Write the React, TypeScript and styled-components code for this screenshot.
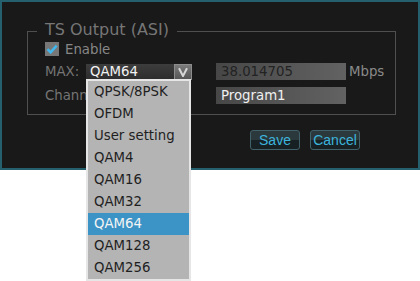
import React from 'react';
import styled, { createGlobalStyle } from 'styled-components';

const GlobalStyle = createGlobalStyle`
  html, body {
    margin: 0;
    padding: 0;
    background: #ffffff;
  }
  body {
    font-family: 'DejaVu Sans', 'Liberation Sans', sans-serif;
    font-size: 13.3px;
  }
`;

const Page = styled.div`
  width: 420px;
  height: 281px;
  background: #ffffff;
`;

const Panel = styled.div`
  width: 420px;
  height: 170px;
  box-sizing: border-box;
  background: #191919;
  border: 2px solid #24606e;
  padding: 29px 0 0 25px;
`;

const Group = styled.div`
  position: relative;
  width: 369px;
  box-sizing: border-box;
  padding: 10px 17px 10px 17px;
  border: 1px solid #4f4f4f;
`;

// sits over the top border, like a fieldset legend
const Legend = styled.span`
  position: absolute;
  top: -12px;
  left: 9px;
  padding: 0 8px;
  line-height: 19px;
  font-size: 16px;
  color: #767676;
  background: #191919;
`;

const CheckRow = styled.label`
  display: flex;
  align-items: center;
  gap: 6px;
  height: 14px;
  color: #878787;
`;

const CheckBox = styled.span`
  width: 14px;
  height: 14px;
  background: #777777;
  display: flex;
  align-items: center;
  justify-content: center;
`;

const Form = styled.div`
  display: grid;
  grid-template-columns: 41px 106px 154px auto;
  grid-auto-rows: 17px;
  row-gap: 7px;
  margin-top: 7px;
  align-items: center;
`;

const Label = styled.span`
  color: #757575;
  white-space: nowrap;
`;

const Unit = styled.span`
  color: #8a8a8a;
  margin-left: 3px;
`;

const SelectWrap = styled.div`
  position: relative;
  height: 16px;
`;

const SelectBox = styled.div`
  display: flex;
  height: 16px;
  background: linear-gradient(#3d3d3d, #2c2c2c);
  color: #f2f2f2;
  line-height: 16px;
`;

const SelectValue = styled.span`
  flex: 1;
  padding-left: 4px;
`;

const ArrowButton = styled.span`
  width: 18px;
  height: 16px;
  box-sizing: border-box;
  background: linear-gradient(#7a7a7a, #565656);
  border: 1px solid #8c8c8c;
  display: flex;
  align-items: center;
  justify-content: center;
`;

const Menu = styled.ul`
  position: absolute;
  z-index: 10;
  top: 15px;
  left: 0;
  width: 105px;
  box-sizing: border-box;
  margin: 0;
  padding: 0;
  list-style: none;
  background: #b4b4b4;
  border: 2px solid #e6e6e6;
`;

const MenuItem = styled.li<{ $active?: boolean }>`
  height: 22px;
  line-height: 22px;
  padding-left: 6px;
  color: ${(p) => (p.$active ? '#f4f4f4' : '#1f1f1f')};
  background: ${(p) => (p.$active ? '#3c93c6' : 'transparent')};
`;

const TextInput = styled.div<{ $light?: boolean }>`
  height: 17px;
  line-height: 17px;
  margin-left: 24px;
  padding-left: 5px;
  background: linear-gradient(to right, #474747, #626262);
  color: ${(p) => (p.$light ? '#f0f0f0' : '#222222')};
`;

const ButtonRow = styled.div`
  display: flex;
  gap: 10px;
  padding: 15px 0 0 223px;
`;

const Button = styled.button`
  width: 50px;
  height: 20px;
  padding: 0;
  border: 1px solid #41616a;
  border-radius: 3px;
  background: linear-gradient(#2c393c 0%, #2c393c 50%, #172124 50%, #172124 100%);
  color: #3db4dc;
  font-family: 'Liberation Sans', Arial, sans-serif;
  font-size: 14px;
  cursor: pointer;
`;

const options = [
  'QPSK/8PSK',
  'OFDM',
  'User setting',
  'QAM4',
  'QAM16',
  'QAM32',
  'QAM64',
  'QAM128',
  'QAM256',
];

const Check = () => (
  <svg width="12" height="10" viewBox="0 0 12 10">
    <path d="M1.5 5.2 L4.6 8.3 L10.6 1.6" fill="none" stroke="#41b7ec" strokeWidth="2.6" />
  </svg>
);

const Chevron = () => (
  <svg width="10" height="10" viewBox="0 0 10 10">
    <path d="M1 1.2 L5 9 L9 1.2" fill="none" stroke="#d6d6d6" strokeWidth="2" />
  </svg>
);

const App: React.FC = () => {
  const selected = 'QAM64';
  return (
    <Page>
      <GlobalStyle />
      <Panel>
        <Group>
          <Legend>TS Output (ASI)</Legend>
          <CheckRow>
            <CheckBox>
              <Check />
            </CheckBox>
            Enable
          </CheckRow>
          <Form>
            <Label>MAX:</Label>
            <SelectWrap>
              <SelectBox>
                <SelectValue>{selected}</SelectValue>
                <ArrowButton>
                  <Chevron />
                </ArrowButton>
              </SelectBox>
              <Menu>
                {options.map((o) => (
                  <MenuItem key={o} $active={o === selected}>
                    {o}
                  </MenuItem>
                ))}
              </Menu>
            </SelectWrap>
            <TextInput>38.014705</TextInput>
            <Unit>Mbps</Unit>
            <Label>Channel:</Label>
            <span />
            <TextInput $light>Program1</TextInput>
            <span />
          </Form>
        </Group>
        <ButtonRow>
          <Button>Save</Button>
          <Button>Cancel</Button>
        </ButtonRow>
      </Panel>
    </Page>
  );
};

export default App;
